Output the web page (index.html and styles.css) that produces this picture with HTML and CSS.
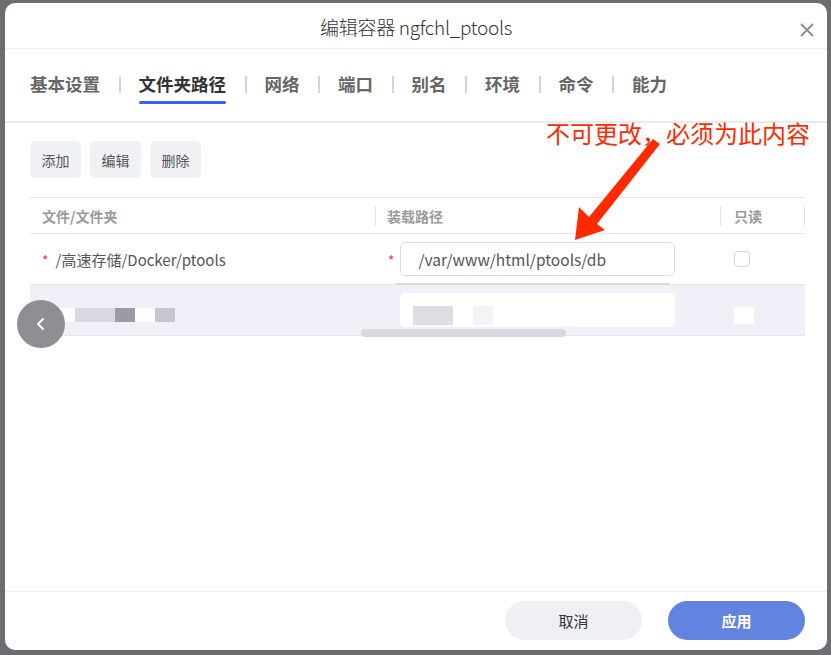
FILE: index.html
```html
<!DOCTYPE html>
<html lang="zh">
<head>
<meta charset="utf-8">
<title>编辑容器 ngfchl_ptools</title>
<link rel="stylesheet" href="styles.css">
</head>
<body>
<div class="dialog">
  <header class="dlg-header">
    <span></span>
    <h1 class="dlg-title">编辑容器 ngfchl_ptools</h1>
    <button class="close-btn" aria-label="关闭">
      <svg width="14" height="14" viewBox="0 0 14 14"><path d="M1 1L13 13M13 1L1 13" stroke="#8a8a8e" stroke-width="1.8" fill="none"/></svg>
    </button>
  </header>

  <nav class="tabs">
    <span class="tab">基本设置</span><span class="sep"></span>
    <span class="tab active">文件夹路径</span><span class="sep"></span>
    <span class="tab">网络</span><span class="sep"></span>
    <span class="tab">端口</span><span class="sep"></span>
    <span class="tab">别名</span><span class="sep"></span>
    <span class="tab">环境</span><span class="sep"></span>
    <span class="tab">命令</span><span class="sep"></span>
    <span class="tab">能力</span>
  </nav>

  <main class="content">
    <div class="toolbar">
      <button class="tool-btn">添加</button>
      <button class="tool-btn">编辑</button>
      <button class="tool-btn">删除</button>
    </div>

    <div class="grid">
      <div class="th">文件/文件夹</div>
      <div class="th th-sep">装载路径</div>
      <div class="th th-sep th-last">只读</div>

      <div class="td"><span class="req">*</span><span class="path">/高速存储/Docker/ptools</span></div>
      <div class="td td-input"><span class="req">*</span><span class="input">/var/www/html/ptools/db</span><span class="smudge"></span></div>
      <div class="td td-check"><span class="checkbox"></span></div>

      <div class="td row2"><span class="blur-bits"><i class="b0"></i><i class="b1"></i><i class="b1"></i><i class="b2"></i><i class="b0"></i><i class="b3"></i></span></div>
      <div class="td td-input row2"><span class="input blank"><i class="c1"></i><i class="c1"></i><i class="c0"></i><i class="c2"></i></span><span class="smudge2"></span></div>
      <div class="td td-check row2"><span class="wbit"></span></div>
    </div>
  </main>

  <footer class="dlg-footer">
    <button class="btn btn-cancel">取消</button>
    <button class="btn btn-apply">应用</button>
  </footer>

  <div class="note">不可更改，必须为此内容</div>
  <svg class="arrow" width="100" height="110" viewBox="565 135 100 110">
    <polygon fill="#ff2a00" points="575,240 579,207 589,217 653,139 660,144 597,224 605,230"/>
  </svg>
</div>
<div class="back-fab" aria-label="返回">
  <svg width="14" height="14" viewBox="0 0 14 14"><path d="M9 2L4 7L9 12" stroke="#fff" stroke-width="2" fill="none" stroke-linecap="round" stroke-linejoin="round"/></svg>
</div>
</body>
</html>
```

FILE: styles.css
```css
* { box-sizing: border-box; }
html, body { margin: 0; padding: 0; }
body {
  width: 831px;
  height: 655px;
  background: #6c6d71;
  font-family: "Noto Sans CJK SC", "Noto Sans", sans-serif;
  color: #333;
  overflow: hidden;
  position: relative;
}
.dialog {
  position: relative;
  margin: 3px 0 0 5px;
  width: 822px;
  height: 647px;
  background: #fff;
  border-radius: 10px;
  display: flex;
  flex-direction: column;
}
.dlg-header {
  height: 46px;
  border-bottom: 1px solid #ececec;
  display: grid;
  grid-template-columns: 1fr auto 1fr;
  align-items: center;
  padding-top: 2px;
}
.dlg-title {
  margin: 0;
  font-size: 19px;
  font-weight: 300;
  color: #333;
  letter-spacing: -0.3px;
}
.close-btn {
  justify-self: end;
  margin-right: 13px;
  margin-top: 6px;
  border: 0;
  background: none;
  padding: 0;
  width: 14px;
  height: 14px;
  display: flex;
}
.tabs {
  height: 74px;
  border-bottom: 2px solid #ebebeb;
  display: flex;
  align-items: center;
  padding-left: 25px;
  padding-top: 6px;
}
.tab {
  display: flex;
  flex-direction: column;
  align-items: center;
  font-size: 17.5px;
  font-weight: 700;
  color: #666;
  line-height: 24px;
}
.tab::after {
  content: "";
  display: block;
  align-self: stretch;
  height: 3px;
  margin-top: 5px;
  border-radius: 2px;
  background: transparent;
}
.tab.active { color: #333; }
.tab.active::after { background: #3b63f3; }
.sep {
  width: 2px;
  height: 17px;
  background: #d4d4d4;
  margin: 0 18px 7px 18.5px;
}
.content {
  flex: 1;
  padding: 18px 22px 0 25px;
}
.toolbar {
  display: flex;
  gap: 9px;
}
.tool-btn {
  height: 37px;
  padding: 0 11.5px;
  border: 0;
  border-radius: 5px;
  background: #f0f1f4;
  font-family: inherit;
  font-size: 14px;
  color: #555;
}
.grid {
  margin-top: 19px;
  display: grid;
  grid-template-columns: 345px 345px 85px;
  border-top: 1px solid #e6e6e6;
}
.th {
  height: 36px;
  display: flex;
  align-items: center;
  padding-left: 12px;
  font-size: 14px;
  font-weight: 700;
  color: #9a9a9a;
  border-bottom: 1px solid #e6e6e6;
  position: relative;
}
.th-sep::before {
  content: "";
  position: absolute;
  left: 0;
  top: 8px;
  width: 1px;
  height: 20px;
  background: #e3e3e3;
}
.th-last { padding-left: 14px; }
.th-last::after {
  content: "";
  position: absolute;
  right: 0;
  top: 8px;
  width: 1px;
  height: 20px;
  background: #e3e3e3;
}
.td {
  height: 51px;
  display: flex;
  align-items: center;
  padding-left: 12px;
  border-bottom: 1px solid #e6e6e6;
  font-size: 15px;
  color: #555;
  position: relative;
}
.req {
  color: #e0434b;
  font-size: 14px;
  margin-right: 7px;
  margin-top: 2px;
}
.td-input { padding-left: 13px; }
.input {
  width: 275px;
  height: 34px;
  margin-left: -2px;
  border: 1px solid #dcdde2;
  border-radius: 5px;
  display: flex;
  align-items: center;
  padding-left: 18px;
  font-size: 15.5px;
  color: #555;
  background: #fff;
}
.input.blank {
  margin-left: 12px;
  border-color: #fff;
  padding-left: 12px;
  padding-top: 10px;
}
.smudge {
  position: absolute;
  left: 20px;
  bottom: -3px;
  width: 275px;
  height: 4px;
  border-radius: 3px;
  background: #dadadd;
}
.smudge2 {
  position: absolute;
  left: -14px;
  bottom: -2px;
  width: 205px;
  height: 8px;
  border-radius: 4px;
  background: #d9d9dd;
}
.td-check { padding-left: 14px; }
.checkbox {
  width: 16px;
  height: 16px;
  border: 1px solid #d4d5da;
  border-radius: 4px;
}
.row2 { background: #f0f0f8; }
.blur-bits { display: flex; margin-left: 13px; margin-top: 10px; }
.blur-bits i, .input.blank i { display: block; width: 20px; height: 14px; }
.input.blank i { height: 19px; }
.b0 { background: #fdfdfe; }
.b1 { background: #d8d8de; }
.b2 { background: #9b9ba3; }
.b3 { background: #c6c6cd; }
.c0 { background: #fff; }
.c1 { background: #dedee2; }
.c2 { background: #f4f4f5; }
.wbit { width: 20px; height: 17px; background: #fff; margin-top: 10px; }
.dlg-footer {
  height: 59px;
  border-top: 1px solid #ececec;
  display: flex;
  justify-content: flex-end;
  align-items: center;
  gap: 26px;
  padding-right: 22px;
  padding-bottom: 2px;
}
.btn {
  width: 137px;
  height: 39px;
  border: 0;
  border-radius: 20px;
  font-family: inherit;
  font-size: 15px;
}
.btn-cancel { background: #eef0f4; color: #333; }
.btn-apply { background: #6283e0; color: #fff; font-weight: 700; }
.note {
  position: absolute;
  left: 541px;
  top: 116px;
  font-size: 24px;
  line-height: 28px;
  color: #ff2a00;
  white-space: nowrap;
}
.arrow {
  position: absolute;
  left: 560px;
  top: 132px;
}
.back-fab {
  position: absolute;
  left: 17px;
  top: 300px;
  width: 48px;
  height: 48px;
  border-radius: 50%;
  background: #8e8e93;
  display: flex;
  align-items: center;
  justify-content: center;
}
```
